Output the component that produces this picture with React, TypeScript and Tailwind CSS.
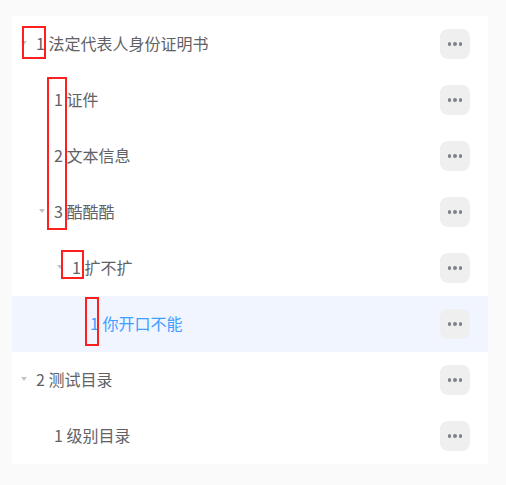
import React from "react";

type Row = { level: number; text: string; caret?: boolean; active?: boolean };

const rows: Row[] = [
  { level: 0, text: "1 法定代表人身份证明书", caret: true },
  { level: 1, text: "1 证件" },
  { level: 1, text: "2 文本信息" },
  { level: 1, text: "3 酷酷酷", caret: true },
  { level: 2, text: "1 扩不扩", caret: true },
  { level: 3, text: "1 你开口不能", active: true },
  { level: 0, text: "2 测试目录", caret: true },
  { level: 1, text: "1 级别目录" },
];

const indent = ["pl-0", "pl-[18px]", "pl-[36px]", "pl-[54px]"];

function Caret({ show }: { show?: boolean }) {
  return (
    <span className="flex w-[24px] h-[24px] items-center justify-center shrink-0">
      {show && (
        <svg width="6" height="4" viewBox="0 0 6 4">
          <path d="M0 0 L6 0 L3 4 Z" fill="#c0c4cc" />
        </svg>
      )}
    </span>
  );
}

function MoreButton() {
  return (
    <div className="flex w-[30px] h-[30px] items-center justify-center gap-[2px] rounded-[8px] bg-[#efefef]">
      <span className="w-[3.5px] h-[3.5px] rounded-full bg-[#7c8088]" />
      <span className="w-[3.5px] h-[3.5px] rounded-full bg-[#7c8088]" />
      <span className="w-[3.5px] h-[3.5px] rounded-full bg-[#7c8088]" />
    </div>
  );
}

export default function App() {
  return (
    <div
      className="min-h-screen bg-[#fafafa] pt-[16px] pl-[12px] pr-[18px]"
      style={{ fontFamily: '"Microsoft YaHei", "Noto Sans CJK SC", sans-serif' }}
    >
      <div className="relative bg-white">
        {rows.map((r, i) => (
          <div
            key={i}
            className={`flex h-[56px] items-center justify-between pr-[18px] ${r.active ? "bg-[#f0f5ff]" : ""}`}
          >
            <div className={`flex items-center pb-[2px] ${indent[r.level]}`}>
              <Caret show={r.caret} />
              <span
                className={`text-[16px] leading-none whitespace-pre ${r.active ? "text-[#409eff]" : "text-[#606266]"}`}
              >
                {r.text}
              </span>
            </div>
            <MoreButton />
          </div>
        ))}
        <div className="absolute left-[10px] top-[10px] w-[24px] h-[33px] border-2 border-[#ff1f1f]" />
        <div className="absolute left-[35px] top-[61px] w-[20px] h-[153px] border-2 border-[#ff1f1f]" />
        <div className="absolute left-[49px] top-[234px] w-[23px] h-[29px] border-2 border-[#ff1f1f]" />
        <div className="absolute left-[73px] top-[281px] w-[14px] h-[49px] border-2 border-[#ff1f1f]" />
      </div>
    </div>
  );
}
